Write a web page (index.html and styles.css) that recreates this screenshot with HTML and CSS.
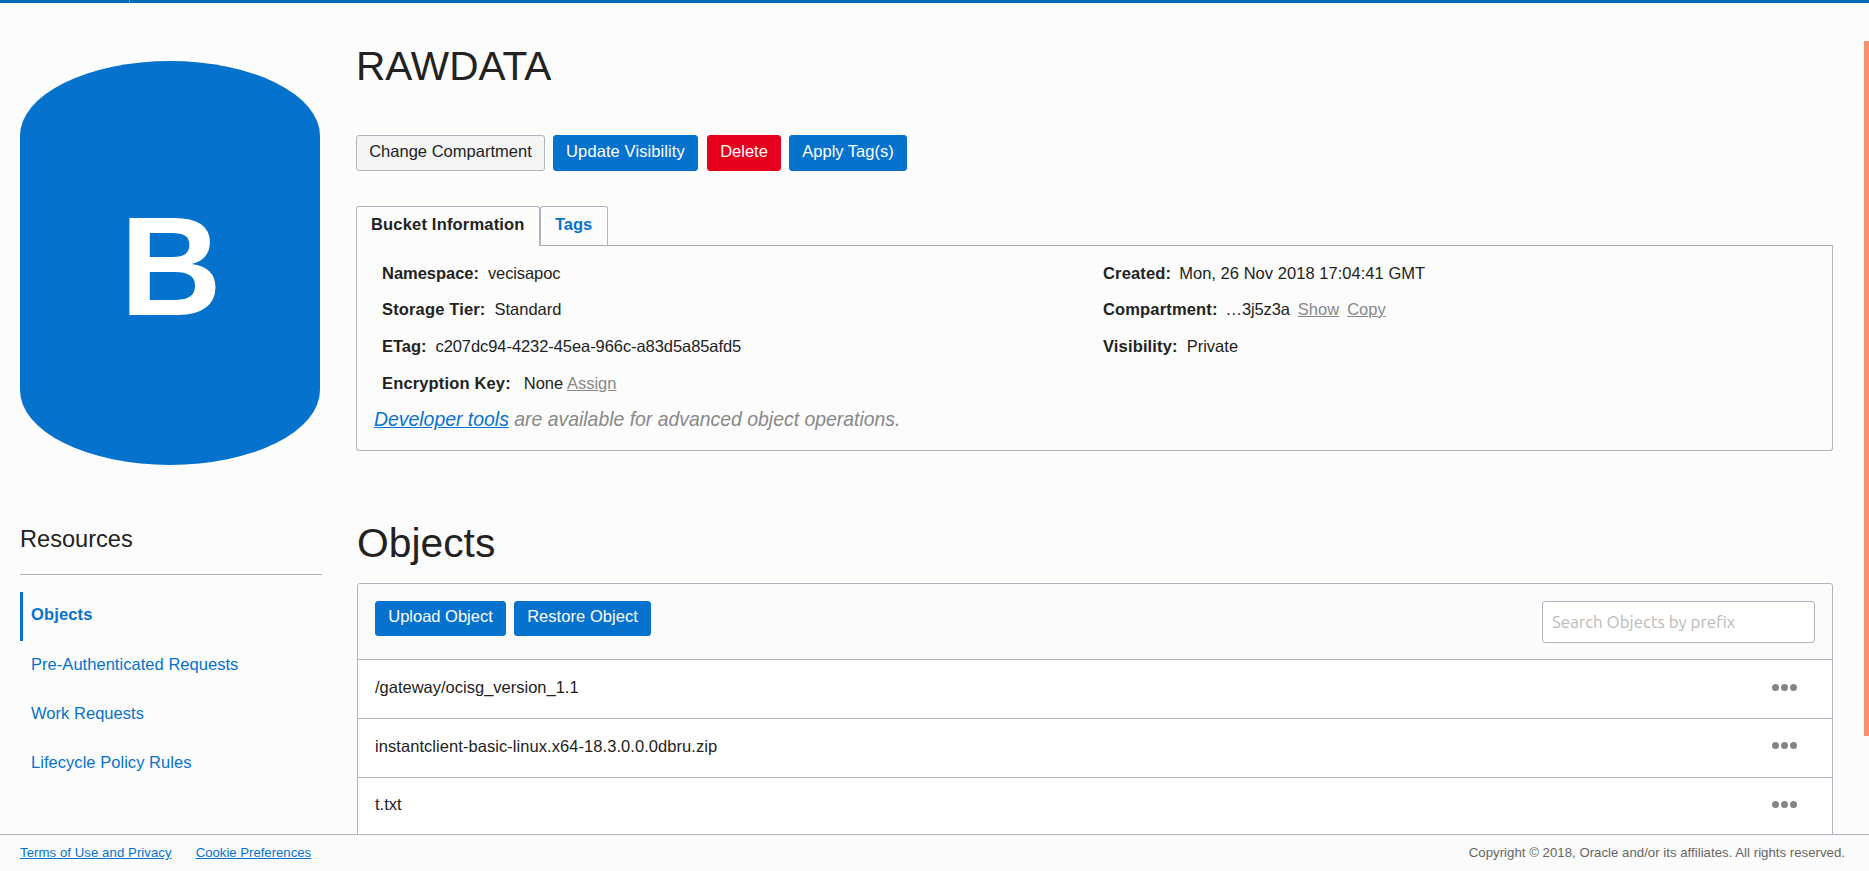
FILE: index.html
```html
<!DOCTYPE html>
<html lang="en">
<head>
<meta charset="utf-8">
<title>RAWDATA</title>
<link rel="stylesheet" href="styles.css">
</head>
<body>
<div class="topbar"><span class="topbar-divider"></span></div>
<div class="page">
  <aside class="sidebar">
    <div class="bucket">B</div>
    <h2 class="side-title">Resources</h2>
    <nav class="side-nav">
      <a class="side-link active">Objects</a>
      <a class="side-link">Pre-Authenticated Requests</a>
      <a class="side-link">Work Requests</a>
      <a class="side-link">Lifecycle Policy Rules</a>
    </nav>
  </aside>
  <main class="content">
    <h1 class="title">RAWDATA</h1>
    <div class="actions">
      <button class="btn btn-plain w-change">Change Compartment</button>
      <button class="btn w-update">Update Visibility</button>
      <button class="btn btn-danger w-delete">Delete</button>
      <button class="btn w-apply">Apply Tag(s)</button>
    </div>
    <div class="tabs">
      <div class="tab tab-on">Bucket Information</div>
      <div class="tab tab-off">Tags</div>
      <div class="tab-rest"></div>
    </div>
    <section class="info">
      <div class="info-cols">
        <div class="info-col">
          <div class="field"><b class="tight">Namespace:</b><span class="ns">vecisapoc</span></div>
          <div class="field"><b>Storage Tier:</b><span>Standard</span></div>
          <div class="field"><b class="tight">ETag:</b><span class="etag">c207dc94-4232-45ea-966c-a83d5a85afd5</span></div>
          <div class="field key"><b>Encryption Key:</b><span>None <a class="muted">Assign</a></span></div>
        </div>
        <div class="info-col">
          <div class="field near"><b>Created:</b><span class="date">Mon, 26 Nov 2018 17:04:41 GMT</span></div>
          <div class="field near"><b>Compartment:</b><span class="ocid">…3j5z3a</span><a class="muted">Show</a><a class="muted">Copy</a></div>
          <div class="field"><b>Visibility:</b><span>Private</span></div>
        </div>
      </div>
      <p class="hint"><a class="link">Developer tools</a> are available for advanced object operations.</p>
    </section>
    <h1 class="title objects-title">Objects</h1>
    <section class="table">
      <div class="table-head">
        <button class="btn btn-short w-upload">Upload Object</button>
        <button class="btn btn-short w-restore">Restore Object</button>
        <input class="search" placeholder="Search Objects by prefix">
      </div>
      <div class="row"><span>/gateway/ocisg_version_1.1</span><svg class="dots" viewBox="0 0 26 8"><circle cx="3.5" cy="4.5" r="3.5"/><circle cx="12.5" cy="4.5" r="3.5"/><circle cx="21.5" cy="4.5" r="3.5"/></svg></div>
      <div class="row"><span class="zip">instantclient-basic-linux.x64-18.3.0.0.0dbru.zip</span><svg class="dots" viewBox="0 0 26 8"><circle cx="3.5" cy="3.5" r="3.5"/><circle cx="12.5" cy="3.5" r="3.5"/><circle cx="21.5" cy="3.5" r="3.5"/></svg></div>
      <div class="row row-last"><span>t.txt</span><svg class="dots" viewBox="0 0 26 8"><circle cx="3.5" cy="3.5" r="3.5"/><circle cx="12.5" cy="3.5" r="3.5"/><circle cx="21.5" cy="3.5" r="3.5"/></svg></div>
    </section>
  </main>
</div>
<footer class="footer">
  <a class="link">Terms of Use and Privacy</a>
  <a class="link cookie">Cookie Preferences</a>
  <span class="copyright">Copyright © 2018, Oracle and/or its affiliates. All rights reserved.</span>
</footer>
<div class="side-marker"></div>
</body>
</html>
```
FILE: styles.css
```css
* { box-sizing: border-box; }
body {
  margin: 0;
  height: 871px;
  overflow: hidden;
  display: flex;
  flex-direction: column;
  background: #fcfcfc;
  color: #222;
  font: 16.5px/20px "Liberation Sans", Arial, sans-serif;
}
.topbar { height: 3px; flex: none; background: #006bb2; display: flex; }
.topbar-divider { width: 1px; margin-left: 129px; background: #4c97c9; }
.page { flex: 1; min-height: 0; overflow: hidden; display: flex; }
.sidebar { flex: none; width: 302px; margin-left: 20px; padding-top: 58px; }
.bucket {
  width: 300px;
  height: 404px;
  border-radius: 150px / 75px;
  background: #0572ce;
  color: #fff;
  font-size: 141px;
  line-height: 410px;
  font-weight: bold;
  text-align: center;
  padding-left: 2px;
}
.side-title {
  margin: 59px 0 0;
  height: 51px;
  border-bottom: 1px solid #aeb5be;
  font-size: 23.6px;
  line-height: 30px;
  font-weight: normal;
}
.side-nav { margin-top: 17px; display: flex; flex-direction: column; }
.side-link { height: 49px; padding: 13px 0 0 11px; color: #0572ce; letter-spacing: .04px; }
.side-link.active { border-left: 3px solid #0572ce; padding: 12px 0 0 8px; font-weight: bold; letter-spacing: .15px; }

.content { width: 1477px; margin-left: 34px; padding-top: 38px; }
.title { margin: 0; height: 94px; font-size: 40.6px; line-height: 50px; font-weight: normal; }
.actions { display: flex; height: 71px; }
.btn {
  height: 36px;
  margin: 0 8px 0 0;
  padding: 5px 0 0;
  display: flex;
  justify-content: center;
  align-items: flex-start;
  border: 1px solid #0572ce;
  border-radius: 3px;
  background: #0572ce;
  color: #fff;
  font: inherit;
}
.btn-short { height: 35px; padding-top: 4px; }
.btn-plain { background: #f5f5f5; border-color: #aeb5c0; color: #222; }
.btn-danger { background: #e7001e; border-color: #e7001e; }
.w-change { width: 189px; letter-spacing: .02px; }
.w-update { width: 145px; margin-right: 9px; letter-spacing: .1px; }
.w-delete { width: 74px; }
.w-apply { width: 118px; }
.w-upload { width: 131px; }
.w-restore { width: 137px; letter-spacing: .05px; }

.tabs { display: flex; height: 40px; }
.tab { padding: 7px 0 0 14px; border: 1px solid #aeb5c0; border-radius: 3px 3px 0 0; font-weight: bold; }
.tab-on { width: 184px; border-bottom: 0; letter-spacing: .18px; white-space: nowrap; }
.tab-off { width: 68px; border-bottom-color: #a6aaae; color: #0572ce; }
.tab-rest { flex: 1; border-bottom: 1px solid #a6aaae; }
.info {
  height: 205px;
  border: 1px solid #aeb5c0;
  border-top: 0;
  border-radius: 0 0 3px 3px;
}
.info-cols { display: flex; padding: 17px 0 0 25px; height: 161px; }
.info-col { width: 721px; display: grid; grid-template-rows: 36px 37px 37px 37px; align-content: start; }
.field { display: flex; gap: 9px; }
.field.near { gap: 8px; }
.field b { letter-spacing: .15px; }
.field .tight { letter-spacing: -.03px; }
.field.key { gap: 13px; }
.ns { letter-spacing: -.1px; }
.etag { letter-spacing: -.07px; }
.date { letter-spacing: .04px; }
.ocid { letter-spacing: -.12px; }
.muted { color: #888; text-decoration: underline; }
.link { color: #0572ce; text-decoration: underline; }
.hint { margin: 0; padding-left: 17px; font-size: 19.41px; line-height: 24px; font-style: italic; color: #888; }

.objects-title { margin-top: 67px; height: 65px; padding-left: 1px; font-size: 40.8px; }
.table { margin-left: 1px; border: 1px solid #aeb5c0; border-radius: 3px 3px 0 0; background: #fff; }
.table-head { height: 75px; padding: 17px; display: flex; background: #fbfbfb; border-radius: 3px 3px 0 0; }
.search {
  width: 273px;
  height: 42px;
  margin-left: auto;
  padding: 0 0 1px 9px;
  border: 1px solid #aeb5c0;
  border-radius: 3px;
  background: #fff;
  font: 16.9px Ubuntu, "Noto Sans", sans-serif;
}
.search::placeholder { color: #bbb; opacity: 1; }
.row {
  height: 59px;
  padding: 17px 34px 0 17px;
  display: flex;
  justify-content: space-between;
  border-top: 1px solid #aeb5be;
}
.row-last { padding-top: 16px; }
.zip { letter-spacing: .06px; }
.dots { width: 26px; height: 8px; margin-top: 6px; fill: #858585; }
.row-last .dots { margin-top: 7px; }

.footer {
  height: 37px;
  flex: none;
  padding: 10px 24px 0 20px;
  display: flex;
  gap: 24px;
  border-top: 1px solid #aeb5be;
  background: #fbfbfb;
  font-size: 13.2px;
  line-height: 16px;
  letter-spacing: .06px;
}
.cookie { letter-spacing: -.02px; }
.copyright { margin-left: auto; color: #666; letter-spacing: .025px; }
.side-marker { position: absolute; right: 0; top: 41px; width: 5px; height: 695px; background: #f5946c; }
```
